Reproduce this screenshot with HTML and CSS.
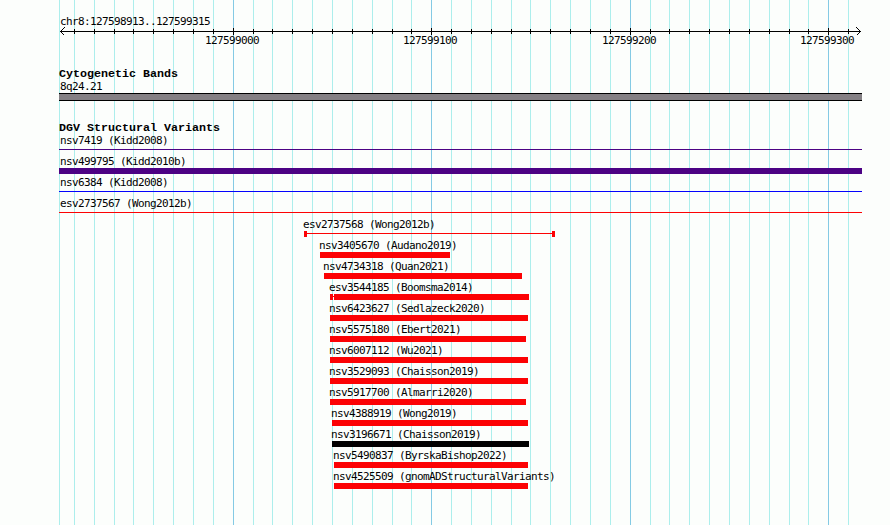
FILE: index.html
```
<!DOCTYPE html>
<html lang="en">
<head>
<meta charset="utf-8">
<title>chr8:127598913..127599315</title>
<link rel="stylesheet" href="styles.css">
</head>
<body>
<main class="browser">
<svg class="grid" width="890" height="525" aria-hidden="true">
<path class="minor" d="M59.5 0V525M74.5 0V525M94.5 0V525M114.5 0V525M133.5 0V525M153.5 0V525M173.5 0V525M193.5 0V525M213.5 0V525M253.5 0V525M272.5 0V525M292.5 0V525M312.5 0V525M332.5 0V525M352.5 0V525M372.5 0V525M392.5 0V525M411.5 0V525M451.5 0V525M471.5 0V525M491.5 0V525M511.5 0V525M530.5 0V525M550.5 0V525M570.5 0V525M590.5 0V525M610.5 0V525M650.5 0V525M669.5 0V525M689.5 0V525M709.5 0V525M729.5 0V525M749.5 0V525M769.5 0V525M789.5 0V525M808.5 0V525M848.5 0V525"/>
<path class="major" d="M233.5 0V525M431.5 0V525M630.5 0V525M828.5 0V525"/>
</svg>
<header class="ruler">
<div class="label">chr8:127598913..127599315</div>
<svg class="axis" width="831" height="19" viewBox="59 28 831 19">
<path d="M60 31.5H861M64.5 27.5L60.5 31.5L64.5 35.5M856.5 27.5L860.5 31.5L856.5 35.5"/>
<path d="M74.5 29V34M94.5 29V34M114.5 29V34M133.5 29V34M153.5 29V34M173.5 29V34M193.5 29V34M213.5 29V34M253.5 29V34M272.5 29V34M292.5 29V34M312.5 29V34M332.5 29V34M352.5 29V34M372.5 29V34M392.5 29V34M411.5 29V34M451.5 29V34M471.5 29V34M491.5 29V34M511.5 29V34M530.5 29V34M550.5 29V34M570.5 29V34M590.5 29V34M610.5 29V34M650.5 29V34M669.5 29V34M689.5 29V34M709.5 29V34M729.5 29V34M749.5 29V34M769.5 29V34M789.5 29V34M808.5 29V34M848.5 29V34M233.5 28V35M431.5 28V35M630.5 28V35M828.5 28V35"/>
<text x="205" y="44">127599000</text><text x="403" y="44">127599100</text><text x="602" y="44">127599200</text><text x="800" y="44">127599300</text>
</svg>
</header>
<section class="track">
<h2>Cytogenetic Bands</h2>
<div class="label">8q24.21</div>
<div class="band"></div>
</section>
<section class="track variants">
<h2>DGV Structural Variants</h2>
<div class="row"><div class="label">nsv7419 (Kidd2008)</div><div class="bar full thin indigo"></div></div>
<div class="row"><div class="label">nsv499795 (Kidd2010b)</div><div class="bar full indigo"></div></div>
<div class="row"><div class="label">nsv6384 (Kidd2008)</div><div class="bar full thin blue"></div></div>
<div class="row"><div class="label">esv2737567 (Wong2012b)</div><div class="bar full thin"></div></div>
<div class="row" style="margin-left:244px"><div class="label">esv2737568 (Wong2012b)</div><div class="span" style="width:251px"><i></i><b></b><i></i></div></div>
<div class="row" style="margin-left:260px"><div class="label">nsv3405670 (Audano2019)</div><div class="bar" style="width:130px"></div></div>
<div class="row" style="margin-left:264px"><div class="label">nsv4734318 (Quan2021)</div><div class="bar" style="width:198px"></div></div>
<div class="row" style="margin-left:270px"><div class="label">esv3544185 (Boomsma2014)</div><div class="span" style="width:199px"><i></i><b class="gap"></b><i class="wide"></i></div></div>
<div class="row" style="margin-left:270px"><div class="label">nsv6423627 (Sedlazeck2020)</div><div class="bar" style="width:198px"></div></div>
<div class="row" style="margin-left:270px"><div class="label">nsv5575180 (Ebert2021)</div><div class="bar" style="width:196px"></div></div>
<div class="row" style="margin-left:270px"><div class="label">nsv6007112 (Wu2021)</div><div class="bar" style="width:198px"></div></div>
<div class="row" style="margin-left:270px"><div class="label">nsv3529093 (Chaisson2019)</div><div class="bar" style="width:198px"></div></div>
<div class="row" style="margin-left:270px"><div class="label">nsv5917700 (Almarri2020)</div><div class="bar" style="width:196px"></div></div>
<div class="row" style="margin-left:272px"><div class="label">nsv4388919 (Wong2019)</div><div class="bar" style="width:196px"></div></div>
<div class="row" style="margin-left:272px"><div class="label">nsv3196671 (Chaisson2019)</div><div class="bar black" style="width:197px"></div></div>
<div class="row" style="margin-left:274px"><div class="label">nsv5490837 (ByrskaBishop2022)</div><div class="bar" style="width:194px"></div></div>
<div class="row" style="margin-left:274px"><div class="label">nsv4525509 (gnomADStructuralVariants)</div><div class="bar" style="width:194px"></div></div>
</section>
</main>
</body>
</html>
```
FILE: styles.css
```
body {
  margin: 0;
  background: #fcfefc;
  color: #000;
}
.browser {
  position: relative;
  box-sizing: border-box;
  width: 890px;
  height: 525px;
  padding: 15px 0 0 59px;
  overflow: hidden;
  font: 11px/13px "DejaVu Sans Mono", "Liberation Mono", monospace;
  letter-spacing: -0.62px;
}
.grid {
  position: absolute;
  inset: 0;
  z-index: -1;
  shape-rendering: crispEdges;
}
.minor { stroke: #aceeec; }
.major { stroke: #84cae4; }
.label {
  height: 13px;
  padding-left: 1px;
  white-space: nowrap;
}
.row .label { padding-left: 0; }
.axis {
  display: block;
  overflow: visible;
}
.axis path {
  fill: none;
  stroke: #000;
  shape-rendering: crispEdges;
}
.ruler { height: 53px; }
.track { height: 53px; }
h2 {
  height: 12px;
  margin: 0;
  font: bold 11.67px/13px "Liberation Mono", monospace;
  letter-spacing: 0;
}
.band {
  box-sizing: border-box;
  width: 803px;
  height: 8px;
  background: #848084;
  border: solid #000;
  border-width: 1px 0;
}
.variants { padding-top: 1px; }
.row {
  height: 21px;
  margin-left: 1px;
}
.bar {
  height: 6px;
  margin-left: 1px;
  background: #fc0204;
}
.full {
  width: 803px;
  margin-left: -1px;
}
.thin {
  height: 1px;
  margin-top: 2px;
}
.indigo { background: #4c0284; }
.blue { background: #0402fc; }
.black { background: #000; }
.span {
  display: flex;
  align-items: center;
  height: 6px;
  margin-left: 1px;
}
.span i {
  width: 3px;
  height: 6px;
  background: #fc0204;
}
.span b {
  flex: 1;
  height: 1px;
  margin-bottom: 1px;
  background: #fc0204;
}
.span .gap { flex: 0 0 1px; }
.span .wide { flex: 1; }
```
